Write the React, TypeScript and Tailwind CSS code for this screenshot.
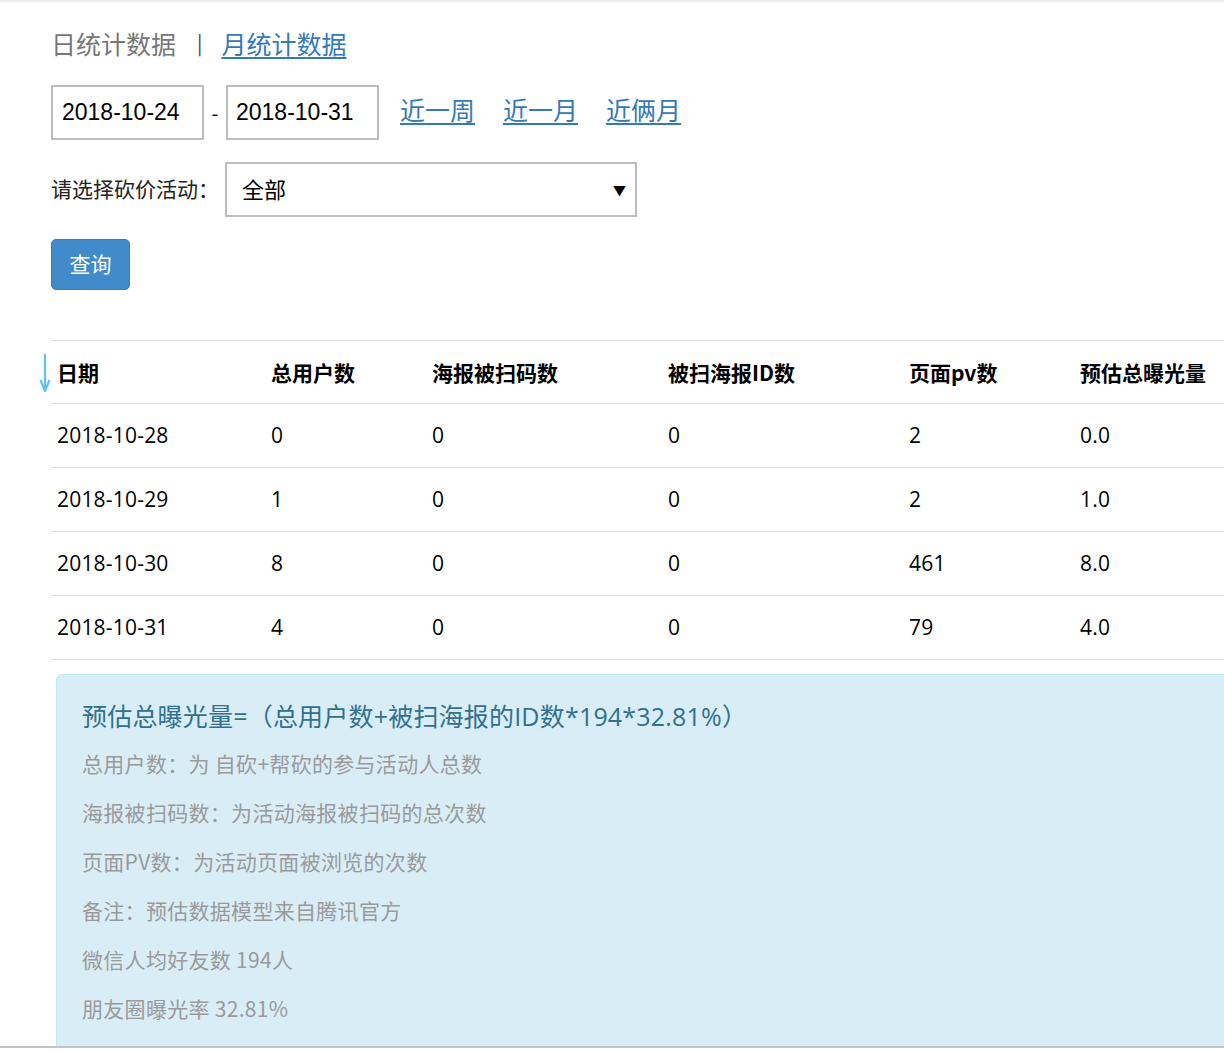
import React from "react";

const rows = [
	{ date: "2018-10-28", users: 0, scans: 0, ids: 0, pv: 2, total: "0.0" },
	{ date: "2018-10-29", users: 1, scans: 0, ids: 0, pv: 2, total: "1.0" },
	{ date: "2018-10-30", users: 8, scans: 0, ids: 0, pv: 461, total: "8.0" },
	{ date: "2018-10-31", users: 4, scans: 0, ids: 0, pv: 79, total: "4.0" },
];

const notes = [
	"总用户数：为 自砍+帮砍的参与活动人总数",
	"海报被扫码数：为活动海报被扫码的总次数",
	"页面PV数：为活动页面被浏览的次数",
	"备注：预估数据模型来自腾讯官方",
	"微信人均好友数 194人",
	"朋友圈曝光率 32.81%",
];

// column widths taken from the header layout
const cols = ["w-[214px]", "w-[161px]", "w-[236px]", "w-[241px]", "w-[171px]", "w-[237px]"];

export default function App() {
	return (
		<div className="w-[1224px] h-[1053px] overflow-hidden bg-white flex flex-col font-['Noto_Sans_CJK_SC','Noto_Sans',sans-serif] text-[#333]">
			<div className="h-[3px] shrink-0 bg-gradient-to-b from-[#e6e6e6] to-white" />
			<div className="h-[1043px] shrink-0 overflow-hidden pl-[51px]">
				{/* tabs */}
				<div className="mt-[22px] h-[36px] flex items-center text-[25px] leading-none">
					<span className="text-[#777]">日统计数据</span>
					<span className="ml-[21px] mr-[19px] text-[20px] text-[#444]">|</span>
					<a href="#" className="text-[#337ab7] underline underline-offset-[3px]">
						月统计数据
					</a>
				</div>

				{/* date range */}
				<div className="mt-[24px] h-[55px] flex items-center">
					<div className="w-[153px] h-[55px] border-2 border-[#bdbdbd] flex items-center pl-[9px] text-[23px] text-black font-['Liberation_Sans',sans-serif]">
						2018-10-24
					</div>
					<span className="w-[22px] text-center text-[20px] text-black">-</span>
					<div className="w-[153px] h-[55px] border-2 border-[#bdbdbd] flex items-center pl-[8px] text-[23px] text-black font-['Liberation_Sans',sans-serif]">
						2018-10-31
					</div>
					<div className="ml-[21px] mb-[6px] flex gap-[28px] text-[25px] leading-none">
						<a href="#" className="text-[#337ab7] underline underline-offset-[3px]">近一周</a>
						<a href="#" className="text-[#337ab7] underline underline-offset-[3px]">近一月</a>
						<a href="#" className="text-[#337ab7] underline underline-offset-[3px]">近俩月</a>
					</div>
				</div>

				{/* activity select */}
				<div className="mt-[22px] h-[55px] flex items-center">
					<span className="w-[174px] mb-[3px] text-[21px] leading-none text-[#222]">请选择砍价活动：</span>
					<div className="w-[412px] h-[55px] border-2 border-[#bdbdbd] flex items-center justify-between pl-[15px] pr-[9px]">
						<span className="mb-[3px] text-[22px] leading-none text-black">全部</span>
						<span className="text-[13px] leading-none text-black">▼</span>
					</div>
				</div>

				{/* query button */}
				<button className="mt-[22px] w-[79px] h-[51px] rounded-[5px] bg-[#428bca] border border-[#357ebd] text-white text-[21px] leading-none flex items-center justify-center pb-[3px]">
					查询
				</button>

				{/* table */}
				<div className="relative mt-[50px] w-[1260px]">
					<svg className="absolute left-[-12px] top-[14px]" width="12" height="38" viewBox="0 0 12 38">
						<line x1="6" y1="0" x2="6" y2="35" stroke="#5cc4f5" strokeWidth="2.2" />
						<path d="M1.5 26 L6 37 L10.5 26" fill="none" stroke="#5cc4f5" strokeWidth="2.2" strokeLinejoin="round" />
					</svg>
					<div className="flex h-[64px] items-center border-t border-b border-[#dddddd] text-[21px] font-bold text-black">
						{["日期", "总用户数", "海报被扫码数", "被扫海报ID数", "页面pv数", "预估总曝光量"].map((h, i) => (
							<div key={h} className={`${cols[i]} pl-[6px] leading-none`}>
								{h}
							</div>
						))}
					</div>
					{rows.map((r) => (
						<div key={r.date} className="flex h-[64px] items-center border-b border-[#dddddd] text-[21px] tracking-[0.2px] text-black font-['Open_Sans','Noto_Sans_CJK_SC',sans-serif]">
							{[r.date, r.users, r.scans, r.ids, r.pv, r.total].map((v, i) => (
								<div key={i} className={`${cols[i]} pl-[6px] leading-none`}>
									{v}
								</div>
							))}
						</div>
					))}
				</div>

				{/* explanation */}
				<div className="ml-[5px] mt-[14px] w-[1240px] h-[420px] rounded-[6px] bg-[#d9edf7] border border-[#bce8f1] pl-[25px] pt-[18px]">
					<div className="h-[46px] flex items-center text-[25px] leading-none tracking-[0.2px] text-[#31708f] font-['Open_Sans','Noto_Sans_CJK_SC',sans-serif]">
						预估总曝光量=（总用户数+被扫海报的ID数*194*32.81%）
					</div>
					{notes.map((n) => (
						<div key={n} className="h-[49px] flex items-center text-[21px] leading-none tracking-[0.3px] text-[#9a9a9a]">
							{n}
						</div>
					))}
				</div>
			</div>
			<div className="h-[2px] shrink-0 bg-[#c4c4c4]" />
		</div>
	);
}
